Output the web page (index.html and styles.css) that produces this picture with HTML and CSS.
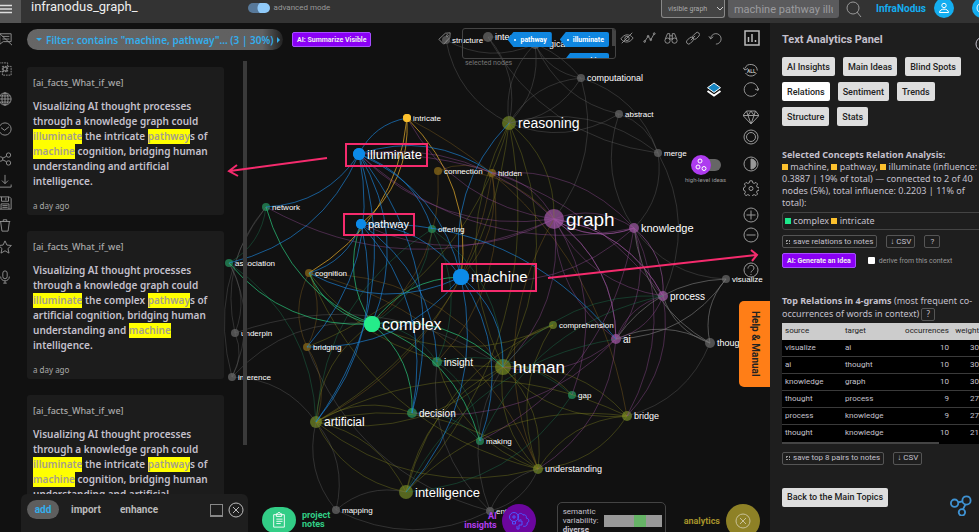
FILE: index.html
```html
<!DOCTYPE html>
<html lang="en">
<head>
<meta charset="utf-8">
<title>infranodus_graph_</title>
<link rel="stylesheet" href="styles.css">
</head>
<body>
<svg class="sprite" aria-hidden="true">
  <symbol id="i-close" viewBox="0 0 16 16"><circle cx="8" cy="8" r="7"/><path d="M5 5l6 6M11 5l-6 6"/></symbol>
  <symbol id="i-network" viewBox="0 0 24 24"><circle cx="5" cy="10" r="4"/><circle cx="18" cy="7" r="4.500"/><circle cx="13" cy="20" r="3.500"/><path d="M9 9l5-1M17 11l-3 6"/></symbol>
</svg>

<header class="topbar">
  <button class="menu" aria-label="Menu"><svg viewBox="0 0 12 10"><path d="M0 1.500h12M0 5h12M0 8.500h12"/></svg></button>
  <h1>infranodus_graph_</h1>
  <label class="mode"><input type="checkbox" checked>advanced mode</label>
  <div class="search">
    <div class="scope">
      <select aria-label="Search scope"><option>visible graph</option></select>
      <svg viewBox="0 0 8 6"><path d="M1 1l3 3 3-3"/></svg>
    </div>
    <input type="text" aria-label="Search" value="machine pathway illuminate">
    <button class="find" aria-label="Find"><svg viewBox="0 0 16 16"><circle cx="7" cy="7" r="6"/><path d="M11 11l4 5"/></svg></button>
  </div>
  <a class="brand" href="#">InfraNodus</a>
  <button class="avatar" aria-label="Account"><svg viewBox="0 0 12 12"><circle cx="6" cy="3.500" r="2.200"/><path d="M1.500 10.500c0-4.500 9-4.500 9 0z"/></svg></button>
  <button class="avatar next" aria-label="Help"><svg viewBox="0 0 12 12"><circle cx="6" cy="6" r="5"/></svg></button>
</header>

<div class="workspace">
  <svg class="graph" id="graph" viewBox="0 23 979 509" role="img" aria-label="Knowledge graph"></svg>

  <nav class="rail" aria-label="Tools">
    <div class="group wide">
      <button aria-label="Hide notes"><svg viewBox="0 0 16 16"><path d="M2 2h13v9h-9l-4 3zM5 5h8M5 8h8M0 0l16 15"/></svg></button>
      <button aria-label="Combine"><svg viewBox="0 0 16 16"><path d="M1 1h10v10H1zM5 5h10v10H5z" stroke-dasharray="2 1"/><path d="M6 6h4v4H6z"/></svg></button>
      <button aria-label="Publish"><svg viewBox="0 0 16 16"><circle cx="8" cy="8" r="7"/><ellipse cx="8" cy="8" rx="3.500" ry="7"/><path d="M8 1v14M1 8h14M2 4.500h12M2 11.500h12"/></svg></button>
      <button aria-label="History"><svg viewBox="0 0 16 16"><circle cx="8" cy="8" r="7"/><path d="M3.500 6.500l4 3 5-4"/></svg></button>
    </div>
    <div class="group">
      <button aria-label="Share"><svg viewBox="0 0 16 16"><circle cx="3" cy="8" r="2.500"/><circle cx="12" cy="3.500" r="2.500"/><circle cx="12" cy="12.500" r="2.500"/><path d="M5.500 7l4-2M5.500 9l4 2"/></svg></button>
      <button aria-label="Download"><svg viewBox="0 0 16 16"><path d="M8 1v10M4.500 7.500L8 11l3.500-3.500M1 12v3h14v-3"/></svg></button>
      <button aria-label="Save"><svg viewBox="0 0 16 16"><path d="M1 1h12l2 2v12H1zM4 1v5h8V1M9 2v3M3.500 15V9h9v6M5 11h6M5 13h6"/></svg></button>
      <button aria-label="Delete"><svg viewBox="0 0 16 16"><path d="M2 4h12M6 4V2h4v2M3 4l1.500 11h7L13 4"/></svg></button>
      <button aria-label="Favourite"><svg viewBox="0 0 16 16"><path d="M8 1l2.200 4.800 5.100.5-3.900 3.500 1.200 5.200L8 12.300 3.400 15l1.200-5.200L.7 6.300l5.100-.5z"/></svg></button>
    </div>
    <div class="group">
      <button aria-label="Dictate"><svg viewBox="0 0 16 16"><rect x="5.500" y="1" width="5" height="9" rx="2.500"/><path d="M3 7.500c0 6.500 10 6.500 10 0M8 12.500V15M6 15h4"/></svg></button>
    </div>
  </nav>

  <main class="main">
    <div class="toprow">
      <button class="filter"><i class="down"></i><span>Filter: contains "machine, pathway"... (3 | 30%)</span><i class="right"></i></button>
      <button class="ai">AI: Summarize Visible</button>
      <div class="selection">
        <svg class="ico tagicon" viewBox="0 0 16 16"><path d="M1 9L9 1.500 15 1l-.5 6L7 15z"/><circle cx="11.500" cy="4.500" r="1.200"/></svg>
        <div class="picked">
          <div class="tagbox">
            <button class="tag"><i></i>pathway</button>
            <button class="tag"><i></i>illuminate</button>
            <button class="tag"><i></i>machine</button>
            <span class="thumb"></span>
          </div>
          <p>selected nodes</p>
        </div>
        <div class="icons">
          <button aria-label="Hide"><svg viewBox="0 0 16 16"><path d="M1 9c4-6 10-6 14-1-4 6-10 6-14 1zM2 14L14 2"/><circle cx="8" cy="8.500" r="2.500"/></svg></button>
          <button aria-label="Path"><svg viewBox="0 0 16 16"><path d="M3 12l4-6 3 4 4-7"/><circle cx="3" cy="12" r="1"/><circle cx="7" cy="6" r="1"/><circle cx="10" cy="10" r="1"/><circle cx="14" cy="3" r="1"/></svg></button>
          <button aria-label="Explore"><svg viewBox="0 0 16 16"><circle cx="4" cy="11" r="3"/><circle cx="12" cy="11" r="3"/><path d="M1.500 9L4 3h2.500v7M14.500 9L12 3H9.500v7M6.500 5.500h3M6.500 9h3"/></svg></button>
          <button aria-label="Link"><svg viewBox="0 0 16 16"><rect x="7" y="3" width="9" height="5" rx="2.500" transform="rotate(-45 11.500 5.500)"/><rect x="0" y="8.500" width="9" height="5" rx="2.500" transform="rotate(-45 4.500 11)"/><path d="M5.500 10.500l5-5"/></svg></button>
          <button aria-label="Undo"><svg viewBox="0 0 16 16"><path d="M3 9a6 6 0 1 1 6 6M1 6l2 3 3-2.500"/></svg></button>
        </div>
        <button class="chart" aria-label="Analytics"><svg viewBox="0 0 16 16"><rect x="1" y="1" width="14" height="14"/><path d="M4.500 12V7M8 12V4M11.500 12v-2"/></svg></button>
      </div>
    </div>

    <div class="middle">
      <section class="notes" aria-label="Statements">
        <div class="cards">
          <article>
            <h2>[ai_facts_What_if_we]</h2>
            <p>Visualizing AI thought processes through a knowledge graph could <mark>illuminate</mark> the intricate <mark>pathway</mark>s of <mark>machine</mark> cognition, bridging human understanding and artificial intelligence.</p>
            <time>a day ago</time>
          </article>
          <article>
            <h2>[ai_facts_What_if_we]</h2>
            <p>Visualizing AI thought processes through a knowledge graph could <mark>illuminate</mark> the complex <mark>pathway</mark>s of artificial cognition, bridging human understanding and <mark>machine</mark> intelligence.</p>
            <time>a day ago</time>
          </article>
          <article>
            <h2>[ai_facts_What_if_we]</h2>
            <p>Visualizing AI thought processes through a knowledge graph could <mark>illuminate</mark> the intricate <mark>pathway</mark>s of <mark>machine</mark> cognition, bridging human understanding and artificial intelligence.</p>
            <time>a day ago</time>
          </article>
        </div>
        <span class="scrollbar"></span>
      </section>

      <div class="layers">
        <button class="stack" aria-label="Layers"><svg viewBox="0 0 16 16"><path d="M1.500 9L8 13.500 14.500 9" stroke="#fff" stroke-width="2"/><path d="M8 1l6.500 4.700L8 10.400 1.500 5.700z" fill="#1684c0" stroke="#fff"/></svg></button>
        <label class="ideas">
          <input type="checkbox">
          <svg viewBox="0 0 20 20"><circle cx="10" cy="10" r="10" fill="#ae3bef"/><circle cx="9" cy="6" r="2"/><circle cx="7" cy="12" r="2"/><circle cx="13" cy="13.500" r="2"/></svg>
          <span>high-level ideas</span>
        </label>
      </div>

      <div class="rail right" role="toolbar" aria-label="Graph tools">
        <div class="group">
          <button aria-label="Undo all"><svg viewBox="0 0 16 16"><path d="M2.500 11a6.500 6.500 0 0 0 11 0M1.800 6.500a6.500 6.500 0 0 1 12.500 2M0 5.500l1.800 2.500L5 6.500"/><text x="4" y="10.500">ALL</text></svg></button>
          <button aria-label="Reload"><svg viewBox="0 0 16 16"><path d="M13.500 11.500A6.800 6.800 0 1 1 14.800 8M12 7l3 1.500L16 6"/></svg></button>
        </div>
        <div class="group">
          <button aria-label="Gaps"><svg viewBox="0 0 16 16"><path d="M3.500 2h9L16 6.500 8 15 0 6.500zM0 6.500h16M3.500 2L5 6.500 8 15l3-8.500L12.500 2M5 6.500L8 2l3 4.500"/></svg></button>
          <button aria-label="Focus"><svg viewBox="0 0 16 16"><circle cx="8" cy="8" r="7"/><circle cx="8" cy="8" r="4.500"/></svg></button>
        </div>
        <div class="group loose">
          <button aria-label="Contrast"><svg viewBox="0 0 16 16"><circle cx="8" cy="8" r="7"/><path d="M8 3a5 5 0 0 1 0 10z" fill="#999"/></svg></button>
          <button aria-label="Settings"><svg viewBox="0 0 16 16"><path d="M6.800.8h2.400l.5 2 1.500.6 1.800-1 1.600 1.600-1 1.800.6 1.500 2 .5v2.400l-2 .5-.6 1.500 1 1.800-1.600 1.600-1.800-1-1.500.6-.5 1.500H6.800l-.5-1.500-1.500-.6-1.800 1L1.400 14l1-1.800-.6-1.500-1.300-.5V7.800l1.300-.5.6-1.500-1-1.800L3 2.400l1.800 1 1.500-.6z"/><circle cx="8" cy="8.500" r="2"/></svg></button>
        </div>
        <div class="group">
          <button aria-label="Zoom in"><svg viewBox="0 0 16 16"><circle cx="8" cy="8" r="7"/><path d="M8 3.500v9M3.500 8h9"/></svg></button>
          <button aria-label="Zoom out"><svg viewBox="0 0 16 16"><circle cx="8" cy="8" r="7"/><path d="M3.500 8h9"/></svg></button>
        </div>
        <div class="group last">
          <button aria-label="Help"><svg viewBox="0 0 16 16"><circle cx="8" cy="8" r="7"/><path d="M5 6.500C5 2.500 11 2.500 11 6c0 2.500-3 2.500-3 4.500M8 12v1"/></svg></button>
        </div>
      </div>
    </div>

    <div class="dockrow">
      <div class="dock">
        <button class="on">add</button>
        <button>import</button>
        <button>enhance</button>
        <button class="shrink" aria-label="Minimise"></button>
        <button class="shut" aria-label="Close"><svg><use href="#i-close"/></svg></button>
      </div>
      <button class="launch project"><span class="disc"><svg viewBox="0 0 16 18"><path d="M2 3h12v14H2zM5 2h1.500a1.500 1.500 0 0 1 3 0H11v3H5zM5 8h7M5 10.500h7M5 13h5"/></svg></span><span>project<br>notes</span></button>
      <button class="launch insights"><span>AI<br>insights</span><span class="disc"><svg viewBox="0 0 22 20"><circle cx="6" cy="6" r="4.500"/><path d="M6 4v4M4 6h4M4.500 10.500v2.500h3v-2.500M10 4c2-3 5-1 5 0 3-1 4 2 3 3 3 0 4 4 1 5 1 3-3 4-4 3M10 4v4c1 2 3 1 3 0M10 10h4v4h-3v4h-2v-3"/></svg></span></button>
      <div class="variability"><p>semantic<br>variability:<br><b>diverse</b></p><span class="meter"><i></i></span></div>
      <button class="launch analytics"><span>analytics</span><span class="disc"><svg><use href="#i-close"/></svg></span></button>
    </div>
    <button class="manual">Help &amp; Manual</button>
  </main>

  <aside class="panel">
    <div class="head"><h2>Text Analytics Panel</h2><button aria-label="Close panel"><svg><use href="#i-close"/></svg></button></div>
    <div class="tabs">
      <button>AI Insights</button><button>Main Ideas</button><button>Blind Spots</button>
      <button class="on">Relations</button><button>Sentiment</button><button>Trends</button>
      <button>Structure</button><button>Stats</button>
    </div>
    <section class="concepts">
      <h3>Selected Concepts Relation Analysis:</h3>
      <p><i class="sw"></i> machine, <i class="sw"></i> pathway, <i class="sw"></i> illuminate (influence: 0.3887 | 19% of total) — connected to 2 of 40 nodes (5%), total influence: 0.2203 | 11% of total):</p>
      <div class="linked"><i class="sw green"></i> complex <i class="sw"></i> intricate</div>
      <div class="row"><button class="mini"><i></i>save relations to notes</button><button class="mini">↓ CSV</button><button class="mini q">?</button></div>
      <div class="row gen"><button class="ai">AI: Generate an Idea</button><label><input type="checkbox">derive from this context</label></div>
    </section>
    <section class="relations">
      <p><b>Top Relations in 4-grams</b> (most frequent co-occurrences of words in context) <button class="mini">?</button></p>
      <div class="tablewrap">
        <table>
          <thead><tr><th>source</th><th>target</th><th class="num">occurrences</th><th class="num">weight</th></tr></thead>
          <tbody>
            <tr><td>visualize</td><td>ai</td><td class="num">10</td><td class="num">30</td></tr>
            <tr><td>ai</td><td>thought</td><td class="num">10</td><td class="num">30</td></tr>
            <tr><td>knowledge</td><td>graph</td><td class="num">10</td><td class="num">30</td></tr>
            <tr><td>thought</td><td>process</td><td class="num">9</td><td class="num">27</td></tr>
            <tr><td>process</td><td>knowledge</td><td class="num">9</td><td class="num">27</td></tr>
            <tr><td>thought</td><td>knowledge</td><td class="num">10</td><td class="num">21</td></tr>
          </tbody>
        </table>
        <span class="hbar"></span>
      </div>
      <div class="row"><button class="mini"><i></i>save top 8 pairs to notes</button><button class="mini">↓ CSV</button></div>
    </section>
    <div class="foot"><button class="back">Back to the Main Topics</button><svg class="mark"><use href="#i-network"/></svg></div>
  </aside>

  <svg class="callouts" viewBox="0 23 979 509" aria-hidden="true">
    <rect x="346" y="144" width="81" height="22"/>
    <rect x="344" y="214" width="70" height="21"/>
    <rect x="442" y="264" width="94" height="27"/>
    <path d="M327 158L230 171M237 165L229 171L238 176"/>
    <path d="M548 278L756 255M751 250L757 255L752 261"/>
  </svg>
</div>
<script src="graph.js"></script>
</body>
</html>
```

FILE: styles.css
```css
* { box-sizing: border-box; }
html, body { height: 100%; }
body {
  margin: 0;
  display: flex;
  flex-direction: column;
  overflow: hidden;
  background: #111;
  color: #c4c0cc;
  font: 10px/12px Roboto, "Liberation Sans", sans-serif;
}
h1, h2, h3, p { margin: 0; font-size: inherit; }
button, input, select { font: inherit; color: inherit; margin: 0; }
button { border: 0; padding: 0; background: none; display: block; white-space: nowrap; }
svg { display: block; fill: none; stroke: currentColor; }
.sprite { position: absolute; width: 0; height: 0; }

/* top bar */
.topbar {
  flex: none;
  height: 23px;
  display: flex;
  align-items: flex-start;
  overflow: hidden;
  background: #333;
  color: #aaa;
}
.menu { width: 21px; height: 23px; background: #555; color: #ddd; }
.menu svg { width: 12px; height: 10px; margin-top: -6px; stroke-width: 1.5; }
.topbar h1 { margin-left: 10px; font-size: 13px; line-height: 14px; font-weight: 400; color: #eee; }
.mode { display: flex; align-items: center; gap: 4px; height: 16px; margin-left: 110px; font-size: 8px; color: #999; }
.mode input {
  appearance: none;
  width: 22px;
  height: 10px;
  border-radius: 5px;
  background: radial-gradient(circle at 16px 5px, #90caf9 6px, transparent 7px), #58799a;
  border: 0;
}
.search { display: flex; gap: 3px; margin-left: auto; }
.scope { position: relative; }
.scope select {
  appearance: none;
  width: 64px;
  height: 18px;
  padding: 0 0 0 6px;
  border: 1px solid #888;
  border-top: 0;
  border-radius: 0 0 3px 3px;
  background: #444;
  font-size: 7px;
  color: #aaa;
}
.scope svg { position: absolute; right: 1px; top: 6px; width: 8px; height: 6px; color: #ccc; }
.search > input {
  width: 111px;
  height: 18px;
  padding: 0 6px;
  border: 0;
  border-radius: 0 0 3px 3px;
  background: #5b5b5d;
  color: #9c9c9f;
  font-size: 11px;
}
.find { margin: 0 14px 0 4px; height: 17px; color: #999; }
.find svg { width: 16px; height: 16px; }
.brand { margin-right: 8px; font-size: 10px; line-height: 17px; font-weight: 700; color: #14aef0; text-decoration: none; }
.avatar { width: 20px; height: 20px; margin: -2px 18px 0 0; padding: 4px; border-radius: 50%; background: #14aef0; color: #fff; }
.avatar svg { width: 12px; height: 12px; }
.avatar.next { margin-right: -13px; }

/* workspace */
.workspace { position: relative; flex: 1; min-height: 0; display: flex; overflow: hidden; }
.graph, .callouts { position: absolute; inset: 0; width: 100%; height: 100%; }
.callouts { z-index: 5; pointer-events: none; stroke: #f52b6d; stroke-width: 2; }
.graph text { fill: #fff; stroke: none; font-family: "Liberation Sans", Arial, sans-serif; }

.rail { position: relative; width: 20px; padding: 9px 0 0; margin-left: -2px; display: flex; flex-direction: column; gap: 16px; color: #999; }
.rail .group { display: flex; flex-direction: column; gap: 8px; }
.rail .wide { gap: 16px; }
.rail svg { width: 14px; height: 14px; }

.main { position: relative; flex: 1; min-width: 0; display: flex; flex-direction: column; padding-left: 9px; }
.toprow { display: flex; align-items: flex-start; gap: 9px; padding-top: 5px; }
.filter {
  display: flex;
  align-items: center;
  gap: 4px;
  height: 21px;
  width: 256px;
  margin-top: 1px;
  padding: 0 6px 0 9px;
  border-radius: 11px;
  background: linear-gradient(90deg, #666 0%, #606060 92%, #222 100%);
  color: #33aeed;
  font-family: "Noto Sans", Roboto, sans-serif;
  font-size: 10px;
  font-weight: 600;
}
.filter .down { border: 3px solid transparent; border-top-color: currentColor; margin-top: 3px; }
.filter .right { border: 3px solid transparent; border-left-color: currentColor; margin-left: auto; }
.ai {
  height: 15px;
  padding: 0 4px;
  border: 1px solid #a64dff;
  border-radius: 2px;
  background: #8a00f5;
  color: #eee;
  font-size: 7px;
  font-weight: 700;
}
.toprow .ai { margin-top: 4px; }
.selection { display: flex; align-items: flex-start; margin-left: auto; }
.tagicon { width: 13px; height: 13px; margin: 4px 11px 0 0; color: #999; }
.tagbox {
  position: relative;
  width: 154px;
  height: 31px;
  padding: 3px 6px;
  display: flex;
  flex-wrap: wrap;
  justify-content: flex-end;
  align-content: flex-start;
  gap: 6px 8px;
  overflow: hidden;
  border: 1px solid #444;
  border-radius: 3px;
}
.tag {
  display: flex;
  align-items: center;
  gap: 4px;
  height: 15px;
  padding: 0 5px;
  background: #0f86e0;
  color: #fff;
  font-size: 7px;
  font-weight: 700;
  border-radius: 2px;
  clip-path: polygon(6px 0, 100% 0, 100% 100%, 6px 100%, 0 50%);
}
.tag i { width: 2px; height: 2px; border-radius: 50%; background: #fff; margin-left: 2px; }
.thumb { position: absolute; right: 0; top: 0; width: 3px; height: 17px; background: #444; }
.picked p { padding: 0 3px 1px; font-size: 7px; line-height: 8px; color: #777; }
.icons { display: flex; gap: 8px; margin: 3px 22px 0 4px; color: #999; }
.icons svg { width: 14px; height: 14px; }
.chart { margin: 2px 10px 0 0; color: #bbb; }
.chart svg { width: 16px; height: 16px; stroke-width: 1.5; }

.middle { flex: 1; min-height: 0; display: flex; justify-content: space-between; }
.notes { display: flex; gap: 19px; margin-top: -9px; overflow: hidden; }
.cards { width: 197px; padding-top: 8px; display: flex; flex-direction: column; gap: 16px; font-family: "Noto Sans", Roboto, sans-serif; }
.cards article { flex: none; padding: 8px 6px 2px; border-radius: 3px; background: #1c1c1c; }
.cards h2 { font-size: 9px; line-height: 15px; font-weight: 500; color: #aaa; }
.cards p { margin: 9px 0; font-size: 10px; line-height: 15px; font-weight: 600; margin-right: -4px; }
.cards mark { display: inline-block; background: #ff0; color: #a5a08a; }
.cards time { display: block; font-size: 8px; line-height: 15px; color: #aaa; }
.scrollbar { width: 4px; height: 384px; margin-top: 2px; background: #3a3a3a; z-index: 1; }

.layers { margin: 14px 12px 0 auto; width: 40px; display: flex; flex-direction: column; gap: 57px; }
.layers .stack { align-self: flex-end; margin-right: 9px; }
.stack svg { width: 16px; height: 16px; }
.ideas { position: relative; width: 40px; }
.ideas input { appearance: none; position: absolute; left: 10px; top: 4px; width: 20px; height: 12px; margin: 0; border-radius: 6px; background: #666; }
.ideas svg { position: relative; width: 20px; height: 20px; stroke: #fff; }
.ideas svg circle:first-child { stroke: none; }
.ideas span { display: block; margin: 1px 0 0 -6px; font-size: 6px; line-height: 8px; color: #999; white-space: nowrap; }
.rail.right { width: 27px; margin: -14px 0 0; padding: 8px 0 0; gap: 11px; }
.rail.right .group { gap: 4px; }
.rail.right .loose { gap: 8px; }
.rail.right .last { margin-top: 8px; }
.rail.right svg { width: 16px; height: 16px; }
.rail.right text { font-size: 5px; font-weight: 700; fill: #bbb; stroke: none; }

.dockrow { position: absolute; left: 0; right: 0; bottom: 0; height: 38px; display: flex; align-items: flex-start; padding: 0 10px 0 3px; overflow: hidden; }
.dock { display: flex; align-items: flex-start; width: 227px; height: 38px; padding: 6px 4px 0 6px; border-radius: 6px 6px 0 0; background: #1e1e1e; color: #bbb; font-size: 10px; font-weight: 700; }
.dock button { height: 19px; line-height: 19px; margin-right: 19px; }
.dock .on { width: 32px; margin-right: 12px; border-radius: 10px; background: #5e5e5e; color: #33aeed; }
.dock .shrink { width: 13px; height: 13px; margin: 4px 5px 0 auto; border: 1px solid #888; border-bottom-width: 2px; }
.dock .shut { margin: 2px 0 0; height: 16px; }
.shut svg { width: 16px; height: 16px; }
.launch { display: flex; align-items: center; gap: 6px; font-size: 9px; line-height: 9px; font-weight: 700; }
.disc { flex: none; width: 34px; height: 34px; border-radius: 50%; display: grid; place-items: center; }
.disc svg { width: 16px; height: 16px; }
.project { margin: 13px auto 0 14px; color: #32cd86; text-align: left; }
.project .disc { height: 26px; border-radius: 13px; background: #32cd86; color: #fff; }
.insights { margin: 10px 21px 0 0; gap: 5px; color: #b13df0; text-align: right; }
.insights .disc { background: #6b069e; color: #4d56ff; }
.insights .disc svg { width: 22px; height: 20px; }
.analytics { margin: 10px 0 0 18px; color: #a5922a; }
.analytics .disc { background: #8e8126; color: #c9c199; }
.variability { display: flex; gap: 5px; width: 109px; height: 40px; margin-top: 8px; padding: 4px 3px 0 5px; border: 1px solid #444; border-radius: 5px; font-size: 8px; line-height: 9px; }
.meter { flex: 1; height: 12px; margin-top: 8px; background: #999; }
.meter i { display: block; width: 12px; height: 12px; margin-left: 30px; background: #66b366; }
.manual {
  position: absolute;
  right: 0;
  top: 278px;
  width: 31px;
  height: 86px;
  border-radius: 5px 0 0 5px;
  background: #ff7e17;
  color: #222;
  font-size: 10px;
  font-weight: 700;
  writing-mode: vertical-rl;
}

/* analytics panel */
.panel { position: relative; width: 209px; padding: 10px 0 0 12px; background: #1e1e1e; overflow: hidden; }
.head { display: flex; justify-content: space-between; height: 24px; margin-right: -12px; }
.head h2 { font-size: 11px; line-height: 13px; font-weight: 700; }
.head svg { width: 16px; height: 16px; margin-top: -3px; }
.tabs { display: flex; flex-wrap: wrap; gap: 6px 8px; }
.tabs button, .back { height: 19px; padding: 0 5px; border-radius: 2px; background: #dedede; color: #222; font-size: 9px; font-weight: 500; }
.tabs .on { background: #fff; }
.concepts { margin-top: 22px; }
.concepts h3, .panel p, .linked { font-family: "Noto Sans", Roboto, sans-serif; font-size: 9px; }
.concepts h3 { line-height: 13px; font-weight: 700; }
.sw { display: inline-block; width: 6px; height: 6px; background: #fbc02d; }
.sw.green { background: #1de98b; }
.linked { height: 18px; margin: 3px -6px 5px 0; padding: 0 2px; line-height: 16px; border: 1px solid #444; border-radius: 3px; }
.row { display: flex; gap: 9px; align-items: center; }
.mini { height: 13px; padding: 0 4px; border: 1px solid #555; border-radius: 2px; font-size: 8px; line-height: 10px; }
.mini i { display: inline-block; width: 4px; height: 4px; margin-right: 3px; border: 1px dotted #999; }
.row .mini { padding: 0 3px; }
.row .q { padding: 0 5px; }
.gen { gap: 12px; margin-top: 5px; }
.gen label { display: flex; align-items: center; gap: 4px; font-size: 7px; color: #999; }
.gen input { appearance: none; width: 7px; height: 7px; background: #fff; border-radius: 1px; }
.relations { margin-top: 26px; }
.relations p { line-height: 13px; }
.relations p .mini { display: inline-block; }
.tablewrap { margin: 2px 0 8px; overflow: hidden; background: #000; }
table { width: 100%; border-collapse: collapse; table-layout: fixed; font-size: 8px; line-height: 16px; }
th, td { padding: 0 0 0 3px; text-align: left; font-weight: 400; height: 17px; }
td { background: #000; border-bottom: 1px solid #3a3a3a; }
tr:last-child td { border-bottom: 0; }
th { background: #ccc; color: #222; }
th:nth-child(1) { width: 60px; }
th:nth-child(2) { width: 52px; }
th:nth-child(3) { width: 55px; }
th.num, td.num { text-align: right; padding-left: 0; }
.hbar { display: block; width: 157px; height: 2px; background: #444; }
.foot { display: flex; justify-content: space-between; align-items: flex-start; margin-top: 23px; }
.mark { width: 22px; height: 22px; margin: 6px 7px 0 0; color: #3f92d2; stroke-width: 2; }
```

FILE: graph.js
```js
// name: [x, y, radius, colour, font size]
const nodes = {
  structure: [446, 40, 4, "gray", 8], integration: [488, 37, 5, "gray", 9], logical: [535, 44, 5, "gray", 9],
  computational: [581, 78, 4, "gray", 9], abstract: [619, 114, 4, "gray", 8], merge: [658, 153, 4, "gray", 8],
  intricate: [407, 118, 4, "amber", 8], illuminate: [359, 154, 6, "blue", 13], reasoning: [509, 123, 7, "olive", 14],
  connection: [438, 171, 4, "brown", 8], hidden: [492, 173, 4, "brown", 8], network: [266, 207, 4, "green", 8],
  pathway: [361, 224, 5, "blue", 11], offering: [432, 229, 4, "green", 8], graph: [554, 219, 10, "purple", 19],
  knowledge: [634, 228, 5, "purple", 11], association: [229, 263, 4, "green", 8], cognition: [309, 273, 4, "brown", 8],
  machine: [461, 277, 8, "blue", 15], visualize: [726, 279, 4, "gray", 8], process: [663, 296, 5, "purple", 10],
  complex: [372, 324, 8, "lime", 16], comprehension: [553, 325, 4, "olive", 8], underpin: [235, 333, 4, "gray", 8],
  ai: [616, 339, 5, "purple", 10], thought: [710, 343, 5, "gray", 9], bridging: [307, 347, 4, "brown", 8],
  insight: [437, 362, 5, "green", 10], human: [503, 367, 8, "olive", 17], inference: [232, 377, 4, "gray", 8],
  gap: [572, 395, 4, "green", 8], decision: [412, 413, 5, "green", 10], artificial: [316, 422, 6, "olive", 12],
  bridge: [627, 416, 5, "olive", 9], making: [480, 441, 4, "green", 8], understanding: [538, 469, 5, "olive", 9],
  intelligence: [406, 492, 7, "olive", 13], mapping: [336, 510, 4, "gray", 8], entity: [490, 511, 4, "gray", 8]
};

const fills = {
  gray: "#505050", amber: "#fcc12e", blue: "#0c8ae8", olive: "#56661f", brown: "#6b5316",
  green: "#1f7049", lime: "#25ec8a", purple: "#78437c"
};

// colour, opacity, width, then "source: targets"; every curve bends to the left of its direction
const edges = [
  ["#1b84d8", 0.65, 1, {
    illuminate: "intricate hidden association network bridging complex artificial machine decision offering",
    pathway: "machine ai decision artificial cognition insight",
    machine: "cognition human bridging intelligence making reasoning"
  }],
  ["#d9a42a", 0.75, 1, { intricate: "pathway cognition machine" }],
  ["#29c47a", 0.7, 1, { complex: "network association cognition pathway machine human decision making" }],
  ["#1f8a5b", 0.35, 1, {
    network: "association", offering: "insight complex human", association: "artificial", complex: "insight",
    insight: "making gap", decision: "making", gap: "intelligence", making: "process", human: "process",
    artificial: "offering", intelligence: "ai"
  }],
  ["#9a4f9e", 0.4, 1, {
    graph: "illuminate knowledge process ai pathway network intricate human gap",
    knowledge: "graph illuminate ai bridge making machine",
    process: "graph ai bridge", ai: "process graph human decision understanding",
    hidden: "graph knowledge", illuminate: "graph process"
  }],
  ["#a85dac", 0.55, 1, { graph: "process ai", knowledge: "graph process" }],
  ["#777", 0.65, 1, { ai: "visualize thought", visualize: "ai", thought: "visualize process knowledge" }],
  ["#8a8d22", 0.36, 1, {
    reasoning: "human intelligence artificial bridging graph",
    human: "bridge understanding artificial reasoning comprehension cognition gap",
    artificial: "intelligence bridge understanding decision complex",
    understanding: "bridge human artificial comprehension insight cognition",
    intelligence: "artificial human bridge comprehension",
    bridge: "understanding human", comprehension: "complex"
  }],
  ["#7a5a1c", 0.45, 1, {
    connection: "hidden complex graph", hidden: "insight artificial machine", cognition: "bridging human understanding",
    bridging: "artificial cognition", intricate: "bridge", understanding: "graph"
  }],
  ["#666", 0.38, 1, {
    reasoning: "structure logical computational merge",
    logical: "structure reasoning", integration: "computational reasoning",
    computational: "logical merge reasoning graph", abstract: "logical merge reasoning",
    merge: "integration knowledge process", knowledge: "abstract",
    visualize: "knowledge", thought: "bridge", underpin: "inference network human",
    inference: "complex network artificial", mapping: "artificial intelligence",
    entity: "mapping human understanding insight bridging", artificial: "mapping",
    understanding: "entity", association: "underpin inference"
  }]
];

const svg = document.getElementById("graph");
function add(tag, attrs, text) {
  const el = document.createElementNS("http://www.w3.org/2000/svg", tag);
  for (const key in attrs) el.setAttribute(key, attrs[key]);
  if (text) el.textContent = text;
  svg.appendChild(el);
}

for (const name in nodes) {
  const [x, y, r, colour] = nodes[name];
  add("circle", { cx: x, cy: y, r: r, fill: fills[colour], stroke: "none" });
}
for (const [colour, opacity, width, links] of edges.slice().reverse()) {
  for (const from in links) {
    for (const to of links[from].split(" ")) {
      const [x1, y1] = nodes[from];
      const [x2, y2] = nodes[to];
      const cx = (x1 + x2) / 2 + (y2 - y1) / 4;
      const cy = (y1 + y2) / 2 + (x1 - x2) / 4;
      add("path", { d: `M${x1} ${y1}Q${cx} ${cy} ${x2} ${y2}`, stroke: colour, "stroke-opacity": opacity, "stroke-width": width });
    }
  }
}
for (const name in nodes) {
  const [x, y, r, colour, size] = nodes[name];
  if (["blue", "lime", "amber"].includes(colour)) add("circle", { cx: x, cy: y, r: r, fill: fills[colour], stroke: "none" });
  add("text", { x: x + r + 2, y: y + Math.round(size * 0.35), "font-size": size }, name);
}
```
